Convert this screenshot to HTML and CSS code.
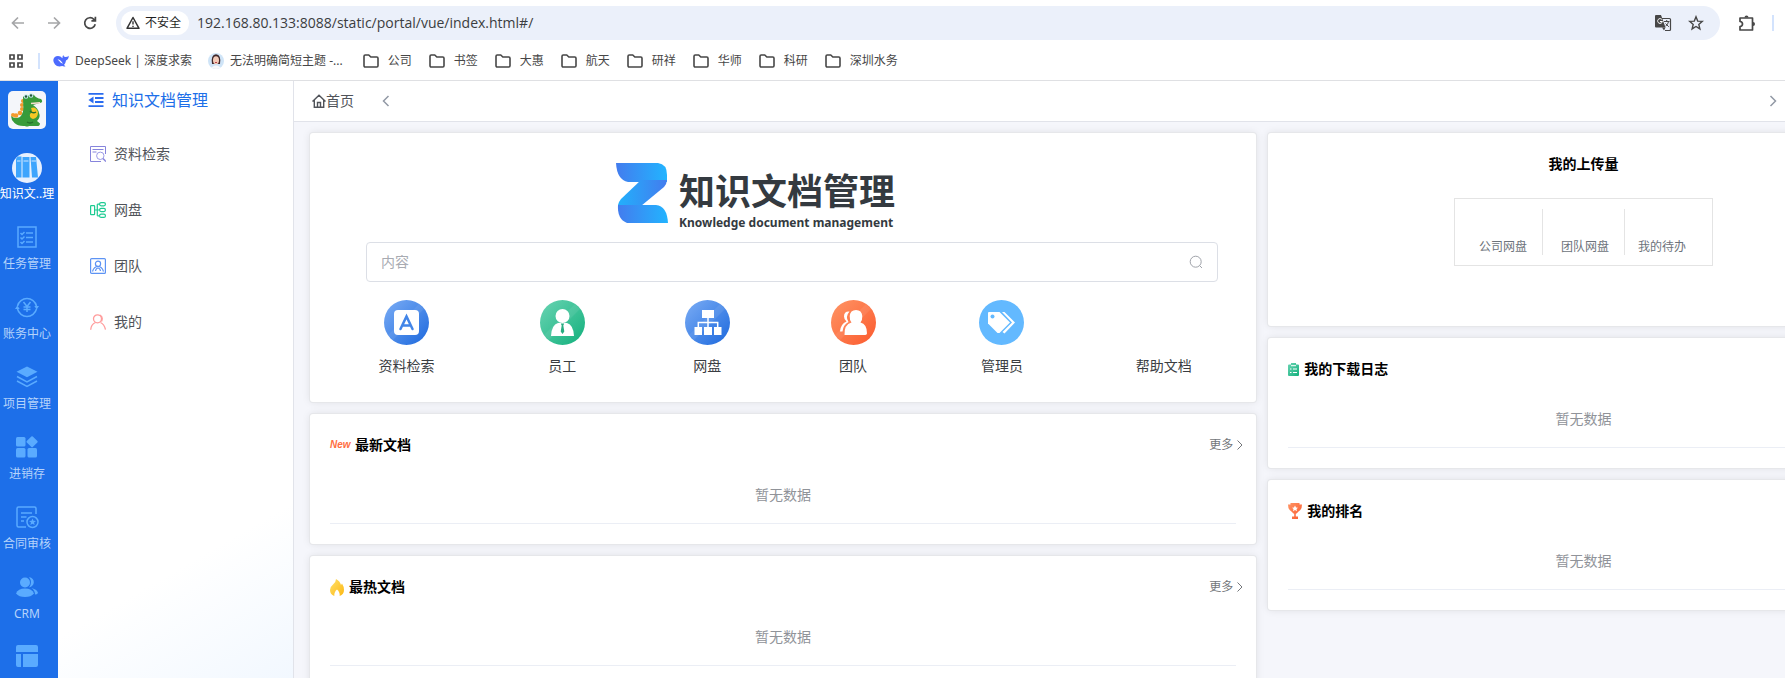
FILE: index.html
```html
<!DOCTYPE html>
<html lang="zh-CN">
<head>
  <meta charset="UTF-8" />
  <meta name="viewport" content="width=device-width, initial-scale=1" />
  <title>知识文档管理</title>
  <link rel="stylesheet" href="styles.css">
</head>
<body>
  <!-- shared symbols and gradients -->
  <svg class="defs" aria-hidden="true">
    <defs>
      <symbol id="folder" viewBox="0 0 16 16">
        <path d="M1 3.200q0-1.200 1.200-1.200h3.600l2 2h6q1.200 0 1.200 1.200v7.600q0 1.200-1.200 1.200H2.200Q1 14 1 12.800z" fill="none" stroke="#474747" stroke-width="1.600" stroke-linejoin="round"/>
      </symbol>
      <linearGradient id="blue" x1="0" y1="0" x2="1" y2="1"><stop offset="0" stop-color="#7badf5"/><stop offset="1" stop-color="#1c68dd"/></linearGradient>
      <linearGradient id="green" x1="0" y1="0" x2="1" y2="1"><stop offset="0" stop-color="#6ad4b3"/><stop offset="1" stop-color="#12b07c"/></linearGradient>
      <linearGradient id="orange" x1="0" y1="0" x2="1" y2="1"><stop offset="0" stop-color="#ff9565"/><stop offset="1" stop-color="#fb5a2e"/></linearGradient>
      <linearGradient id="brand"><stop offset="0" stop-color="#437cee"/><stop offset="1" stop-color="#22b4ff"/></linearGradient>
      <linearGradient id="brand-mid"><stop offset="0" stop-color="#22b0fc"/><stop offset="1" stop-color="#437cee"/></linearGradient>
      <linearGradient id="fire" x1="0" y1="0" x2="1" y2="1"><stop offset="0" stop-color="#ffe16b"/><stop offset="1" stop-color="#fdb813"/></linearGradient>
    </defs>
  </svg>

  <header class="browser">
    <div class="toolbar">
      <button class="nav-btn muted" aria-label="后退"><svg width="16" height="16" viewBox="0 0 16 16"><path d="M14 8H3M8 2.500 2.500 8 8 13.500"/></svg></button>
      <button class="nav-btn muted" aria-label="前进"><svg width="16" height="16" viewBox="0 0 16 16"><path d="M2 8h11M8 2.500 13.500 8 8 13.500"/></svg></button>
      <button class="nav-btn" aria-label="刷新"><svg width="16" height="16" viewBox="0 0 16 16"><path d="M13.200 9.200A5.300 5.300 0 1 1 11.800 4.300L13 5.500M13.400 1.800v4h-4"/></svg></button>
      <div class="address">
        <button class="chip">
          <svg width="14" height="14" viewBox="0 0 14 14"><path d="M7 1.500 13 12.300H1z" fill="none" stroke="#333" stroke-width="1.500" stroke-linejoin="round"/><path d="M7 5.200v3.400M7 9.700v1.400" stroke="#333" stroke-width="1.400"/></svg>
          不安全
        </button>
        <input class="url" type="text" aria-label="地址" value="192.168.80.133:8088/static/portal/vue/index.html#/" />
        <button class="nav-btn" aria-label="翻译">
          <svg width="18" height="18" viewBox="0 0 18 18"><path d="M8 4.500h7.500q1 0 1 1v10q0 1-1 1H11" fill="none" stroke="#474747" stroke-width="1.200"/><path class="solid" d="M2 1h5l4.500 12.500H2q-1 0-1-1V2q0-1 1-1z"/><path class="thin-w" d="M8 5.600A2.400 2.400 0 1 0 8.400 7.500H6"/><path class="thin-d" d="M10 7.500h5.500M12.700 6v1.500M14.500 7.800q-.5 2.500-3 4.500M11.500 9.500l3.300 3.300"/><path class="solid" d="M8 13.500h3.500L10 16.500z"/></svg>
        </button>
        <button class="nav-btn" aria-label="收藏">
          <svg width="16" height="16" viewBox="0 0 16 16"><path d="m8 1.800 1.700 4.300 4.600.3-3.500 3 1.100 4.500L8 11.500l-3.900 2.400 1.100-4.500-3.500-3 4.600-.3z" stroke-width="1.400"/></svg>
        </button>
      </div>
      <button class="nav-btn" aria-label="扩展程序">
        <svg width="18" height="18" viewBox="0 0 18 18"><path d="M2 4h12.500v12H2v-3.500q2.500-.3 2.500-2.500T2 7.500z" stroke-linejoin="round"/><path class="solid" d="M6.500 3.500a2 2 0 0 1 4 0zM15 8a2 2 0 0 1 0 4z"/></svg>
      </button>
      <span class="sep"></span>
    </div>
    <nav class="bookmarks">
      <button class="nav-btn apps" aria-label="应用"><svg width="14" height="14" viewBox="0 0 14 14"><path d="M1 1h4v4H1zM9 1h4v4H9zM1 9h4v4H1zM9 9h4v4H9z"/></svg></button>
      <span class="sep"></span>
      <a class="deepseek" href="#"><svg width="16" height="16" viewBox="0 0 16 16"><path d="M.3 7Q1 3.200 5 3q2.500 0 4.500 2.200Q9.300 3.400 10.200 2q.5 1.800 2 2.100Q14.700 4 15.700 2.800 15.800 6.500 13 7.600q-.4 3-2 4.300l1.500 1.300q-1.800.6-3.300-.2Q4.500 14.300 2 11.500.2 9.500.3 7z" fill="#4d6bfe"/><path d="M4.500 6.200q3.700.8 5.500 4.600-2.500-.5-3.800-2.800z" fill="#fff"/></svg>DeepSeek | 深度求索</a>
      <a class="topic" href="#"><svg width="16" height="16" viewBox="0 0 16 16"><circle cx="8" cy="8" r="8" fill="#cfe4f7"/><path d="M4 11Q2.500 2 8 1.300 13.500 2 12 11z" fill="#40282a"/><ellipse cx="8" cy="7.300" rx="3" ry="4" fill="#f3cbb9"/><path d="M3.500 14.500Q8 10.500 12.500 14.500 8 17.300 3.500 14.500z" fill="#f8f8fa"/><path d="M7 9.500h2" stroke="#b9424b"/></svg>无法明确简短主题 -...</a>
      <a class="dir" href="#"><svg width="18" height="16"><use href="#folder"/></svg>公司</a>
      <a class="dir" href="#"><svg width="18" height="16"><use href="#folder"/></svg>书签</a>
      <a class="dir" href="#"><svg width="18" height="16"><use href="#folder"/></svg>大惠</a>
      <a class="dir" href="#"><svg width="18" height="16"><use href="#folder"/></svg>航天</a>
      <a class="dir" href="#"><svg width="18" height="16"><use href="#folder"/></svg>研祥</a>
      <a class="dir" href="#"><svg width="18" height="16"><use href="#folder"/></svg>华师</a>
      <a class="dir" href="#"><svg width="18" height="16"><use href="#folder"/></svg>科研</a>
      <a class="dir" href="#"><svg width="18" height="16"><use href="#folder"/></svg>深圳水务</a>
    </nav>
  </header>

  <div class="app">
    <nav class="rail">
      <svg class="avatar" width="38" height="38" viewBox="0 0 38 38">
        <rect width="38" height="38" rx="5" fill="#f4f6fa"/>
        <g fill="#f39a2c"><circle cx="15" cy="10" r="2"/><circle cx="14" cy="14" r="2"/><circle cx="14" cy="18" r="2"/><circle cx="12" cy="22" r="2.300"/><circle cx="8" cy="24.500" r="2.300"/><circle cx="5" cy="24" r="2"/></g>
        <path d="M15 6Q17 3 20 5q3-3 6-1 2 3 7 4 2 2 .5 3.500L25 14q5 3 6 8 2 4-2 8l3 2.500q0 3-4 2.500h-7q-2 1-4 0-7 .5-10.500-3T3 25q4 3.500 9 1 4-4 3.300-11z" fill="#389b3a"/>
        <path d="M23 17q5-2 7 4 0 6-5 7-4-1-3-5 3-2 1-6z" fill="#f5c725"/>
        <path d="M23 12.500l9-.8" stroke="#f7dcd0" stroke-width="1.500"/>
        <path d="M22 20q3 3 6 1M19 31q3 2 6 0" fill="none" stroke="#23702a" stroke-width="1.400"/>
        <circle cx="18" cy="5.500" r="2.300" fill="#c6e9ec"/><circle cx="23" cy="4.500" r="2.300" fill="#c6e9ec"/><circle cx="18" cy="5.500" r="1.200" fill="#24543b"/><circle cx="23" cy="4.500" r="1.200" fill="#24543b"/>
      </svg>
      <a class="rail-item active" href="#">
        <svg width="30" height="30" viewBox="0 0 30 30"><circle cx="15" cy="15" r="15" fill="#e6f0fe"/><path d="M4 6.500q0-2 2-3h3.500v21H4zM10.500 4h7v20.500h-7zM18.500 4H24l2 20.500h-6z" fill="#3ea5fd"/><path d="M5 8h3.500M11.500 8h5M19.500 8H24" stroke="#cfe6ff"/></svg>
        <span>知识文..理</span>
      </a>
      <a class="rail-item" href="#">
        <svg width="24" height="24" viewBox="0 0 24 24"><path class="ln" d="M3 2h18v20H3zM11 8h7M11 12.500h7M11 17h7M5.500 8l1.500 1.500L9.500 7M5.500 12.500 7 14l2.500-2.500M5.500 17 7 18.500 9.500 16"/></svg>
        <span>任务管理</span>
      </a>
      <a class="rail-item" href="#">
        <svg width="24" height="24" viewBox="0 0 24 24"><path class="ln" d="M2.500 11A9.800 9.800 0 0 1 21.500 11M21.500 14A9.800 9.800 0 0 1 2.500 14M8.500 7l3.500 4.500L15.500 7M8.500 12h7M8.500 14.500h7M12 11.500V17"/><path class="fl" d="M19.300 11 21.700 14.500 24 11zM0 14 2.300 10.500 4.700 14z"/></svg>
        <span>账务中心</span>
      </a>
      <a class="rail-item" href="#">
        <svg width="24" height="24" viewBox="0 0 24 24"><path class="fl" d="m12 1.500 10.500 5.300L12 12.300 1.500 6.800z"/><path class="ln" stroke-width="2" d="M2 11.500l10 5.300 10-5.300M2 16l10 5.300L22 16"/></svg>
        <span>项目管理</span>
      </a>
      <a class="rail-item" href="#">
        <svg width="24" height="24" viewBox="0 0 24 24"><g class="fl"><rect x="1" y="2" width="9.500" height="9.500" rx="1.500"/><rect x="1" y="13" width="9.500" height="9.500" rx="1.500"/><rect x="12.500" y="13" width="9.500" height="9.500" rx="1.500"/><rect x="12.800" y="2.500" width="8.500" height="8.500" rx="1" transform="rotate(45 17 6.800)"/></g></svg>
        <span>进销存</span>
      </a>
      <a class="rail-item" href="#">
        <svg width="24" height="24" viewBox="0 0 24 24"><path class="ln" d="M21 9V3.500Q21 2 19.500 2h-16Q2 2 2 3.500v17Q2 22 3.500 22H11M6 8h11M6 12h5.500M6 16h3"/><circle class="ln" cx="17.500" cy="17" r="5.500"/><path class="fl" d="m17.500 13.500 1 2.300 2.500.2-2 1.600.7 2.500-2.200-1.400-2.200 1.400.7-2.500-2-1.600 2.500-.2z"/></svg>
        <span>合同审核</span>
      </a>
      <a class="rail-item" href="#">
        <svg width="24" height="24" viewBox="0 0 24 24"><g class="fl"><circle cx="10" cy="7.500" r="5"/><path d="M1 18.500Q3 13.500 10 13.500T19 18.500Q16 22 10 22T1 18.500z"/><path d="M14 2q5 1 4.800 5.500Q18.500 11 14 12.500 18 7.500 14 2zM16.500 13q6 1.500 6.500 5-1 1.500-3 1.500Q20 15.500 16.500 13z"/></g></svg>
        <span>CRM</span>
      </a>
      <a class="rail-item" href="#" aria-label="工作台">
        <svg width="24" height="24" viewBox="0 0 24 24"><path class="fl" d="M3 1h18q2 0 2 2v5H1V3q0-2 2-2zM1 10h5v13H3q-2 0-2-2zM8 10h15v11q0 2-2 2H8z"/></svg>
      </a>
    </nav>

    <aside class="menu">
      <h2 class="menu-title">
        <svg width="16" height="16" viewBox="0 0 16 16"><path d="M.5 1.800h15M7 6h8.500M7 10h8.500M.5 14.200h15" stroke="#2a6cf0" stroke-width="1.800"/><path d="M5.500 4.500v7L.5 8z" fill="#2a6cf0"/></svg>
        知识文档管理
      </h2>
      <a class="menu-item" href="#"><svg width="16" height="16" viewBox="0 0 16 16" fill="none" stroke="#8684dc"><path d="M15.500 8V.5H.5v15H11M2.500 3.500h11M2.500 6h4"/><circle cx="10.300" cy="9.800" r="3.700" stroke="#9b9ae6"/><path d="m13 12.500 3 3" stroke-width="1.500"/></svg>资料检索</a>
      <a class="menu-item" href="#"><svg width="16" height="16" viewBox="0 0 16 16" fill="none" stroke="#1dcb92" stroke-width="1.200"><rect x=".6" y="3.600" width="4" height="9" rx=".6"/><rect x="9.600" y=".6" width="5.800" height="3.200" rx="1.500"/><rect x="9.600" y="6.400" width="5.800" height="3.200" rx="1.500"/><rect x="9.600" y="12.200" width="5.800" height="3.200" rx="1.500"/><path d="M4.600 8h5M7.300 13.800V2.200M7.300 2.200h2.300M7.300 13.800h2.300"/></svg>网盘</a>
      <a class="menu-item" href="#"><svg width="16" height="16" viewBox="0 0 16 16" fill="none" stroke="#5d93f4" stroke-width="1.200"><rect x=".6" y=".6" width="14.800" height="14.800" rx="1"/><circle cx="8" cy="5.800" r="2.600"/><path d="M2.500 13.500Q4 8.500 8 8.500t5.500 5M5.500 13q.5-3 2.500-3t2.500 3"/></svg>团队</a>
      <a class="menu-item" href="#"><svg width="16" height="16" viewBox="0 0 16 16" fill="none" stroke="#ff9c9c" stroke-width="1.300"><circle cx="7.500" cy="4.800" r="4"/><path d="M.7 15.700Q1 10.500 5.500 8.500M10.500 8.500q4 2 5 7.200M10 1q3.500 2 1.500 6.500"/></svg>我的</a>
    </aside>

    <main class="page">
      <div class="tabs">
        <a class="tab" href="#"><svg width="14" height="14" viewBox="0 0 14 14"><path d="M.5 7.500 7 1.200l6.500 6.300M2.300 6v7.300h9.400V6M5.500 13V8.500h3V13" fill="none" stroke="#505359" stroke-width="1.400"/></svg>首页</a>
        <button class="tab-nav" aria-label="向左"><svg width="8" height="12" viewBox="0 0 8 12"><path d="M6.500 1 1.500 6l5 5"/></svg></button>
        <button class="tab-nav next" aria-label="向右"><svg width="8" height="12" viewBox="0 0 8 12"><path d="m1.500 1 5 5-5 5"/></svg></button>
      </div>

      <div class="content">
        <div class="col">
          <section class="card hero">
            <div class="brand">
              <svg width="52" height="60" viewBox="0 0 52 60">
                <path d="M0 0h42q9 1 9 12v7h-4H12Q1 17 0 0z" fill="url(#brand)"/>
                <path d="M25 17h26q-.3 4-3 7L25 43l-23-1q.5-3 3-6z" fill="url(#brand-mid)"/>
                <path d="M2 42h38q11 1 12 18H11Q1 56 2 42z" fill="url(#brand)"/>
              </svg>
              <div>
                <h1>知识文档管理</h1>
                <p>Knowledge document management</p>
              </div>
            </div>
            <div class="search">
              <input type="text" placeholder="内容" aria-label="内容" />
              <button aria-label="搜索"><svg width="14" height="14" viewBox="0 0 14 14"><path d="M10.600 10.600 13 13" stroke="#a0a3aa"/><circle cx="6.700" cy="6.700" r="5.500" fill="none" stroke="#a0a3aa"/></svg></button>
            </div>
            <nav class="links">
              <a href="#"><svg width="45" height="45" viewBox="0 0 45 45"><circle cx="22.500" cy="22.500" r="22.500" fill="url(#blue)"/><path d="M4 35 35 4l5 5L9 40z" fill="#fff" opacity=".08"/><rect x="10" y="10" width="25" height="25" rx="4" fill="#fff"/><path d="m16.500 29 6-12.500 6 12.500M19 25.500h7" fill="none" stroke="#4285e8" stroke-width="2.500" stroke-linecap="round"/></svg>资料检索</a>
              <a href="#"><svg width="45" height="45" viewBox="0 0 45 45"><circle cx="22.500" cy="22.500" r="22.500" fill="url(#green)"/><path d="M4 35 35 4l5 5L9 40z" fill="#fff" opacity=".08"/><circle cx="22.500" cy="16" r="7" fill="#fff"/><path d="M11 36q.5-11 7-13h9q6.500 2 7 13z" fill="#fff"/><path d="m20.800 23.500h3.400l-.9 2 1 6-1.800 2.500-1.800-2.500 1-6z" fill="#27ad81"/></svg>员工</a>
              <a href="#"><svg width="45" height="45" viewBox="0 0 45 45"><circle cx="22.500" cy="22.500" r="22.500" fill="url(#blue)"/><path d="M4 35 35 4l5 5L9 40z" fill="#fff" opacity=".08"/><path d="M17 10h12v8H17zM9.500 27H17v8H9.500zM19 27h8v8h-8zM29 27h7.500v8H29z" fill="#fff"/><path d="M23 17v10M13.300 27.500v-5h19.400v5" fill="none" stroke="#fff" stroke-width="1.500"/></svg>网盘</a>
              <a href="#"><svg width="45" height="45" viewBox="0 0 45 45"><circle cx="22.500" cy="22.500" r="22.500" fill="url(#orange)"/><path d="M4 35 35 4l5 5L9 40z" fill="#fff" opacity=".08"/><path d="M13.500 35Q13 24.500 20.500 22.500 18.500 20 18.700 16q.5-6 6.300-6t6.300 6q.2 4-1.800 6.500Q36 24 36 33.500q-.5 1.500-2 1.500z" fill="#fff"/><path d="M18.500 11.500q-5.500-.5-5.500 5 0 3 2.500 5-6 2.500-6.500 10h2.500q.5-6.500 6-9.500-3.500-5.500 1-10.500z" fill="#fff"/></svg>团队</a>
              <a href="#"><svg width="45" height="45" viewBox="0 0 45 45"><circle cx="22.500" cy="22.500" r="22.500" fill="#63b9ff"/><path d="M9 13q0-1 1-1h10.500L31 22.500 20.500 33h-2L9 23.500z" fill="#fff"/><circle cx="13.500" cy="16.500" r="2" fill="#63b9ff"/><path d="M23 12h2.500L36 22.500 25.500 33.500 23.500 32 33 22.500z" fill="#fff"/></svg>管理员</a>
              <a class="no-icon" href="#">帮助文档</a>
            </nav>
          </section>

          <section class="card list">
            <div class="list-head">
              <h3><span class="new" aria-hidden="true">New</span>最新文档</h3>
              <a class="more" href="#">更多<svg width="8" height="12" viewBox="0 0 8 12"><path d="m1.500 1.500 4.500 4.500-4.500 4.500"/></svg></a>
            </div>
            <p class="empty">暂无数据</p>
          </section>

          <section class="card list">
            <div class="list-head">
              <h3><svg width="14" height="17" viewBox="0 0 14 17"><path d="M6 0q4 2 5 6l1-1.500q2 3 2 6.500 0 4.500-4.300 6 .3-4-2.700-6.500-3 2.500-2.700 6.500Q0 15.500 0 11q.3-3.500 3-5.500Q6 3 6 0z" fill="url(#fire)"/></svg>最热文档</h3>
              <a class="more" href="#">更多<svg width="8" height="12" viewBox="0 0 8 12"><path d="m1.500 1.500 4.500 4.500-4.500 4.500"/></svg></a>
            </div>
            <p class="empty">暂无数据</p>
          </section>
        </div>

        <div class="col">
          <section class="card upload">
            <h3>我的上传量</h3>
            <div class="stats">
              <a href="#">公司网盘</a>
              <a href="#">团队网盘</a>
              <a href="#">我的待办</a>
            </div>
          </section>

          <section class="card list">
            <div class="list-head">
              <h3><svg width="11" height="13" viewBox="0 0 11 13"><path d="M1 1.500h2V0h5v1.500h2q1 0 1 1V12q0 1-1 1H1q-1 0-1-1V2.500q0-1 1-1z" fill="url(#green)"/><path d="M3 2.700h5M2 6h1.500M5 6h4M2 9.500h1.500M5 9.500h4" stroke="#fff"/></svg>我的下载日志</h3>
            </div>
            <p class="empty">暂无数据</p>
          </section>

          <section class="card list">
            <div class="list-head">
              <h3><svg width="14" height="16" viewBox="0 0 14 16"><path d="M2.500 0h9v1.500H14Q14 7 10 9q-1 1.500-2.200 1.800v2.700H10V16H4v-2.500h2.200v-2.700Q5 10.500 4 9 0 7 0 1.500h2.500z" fill="url(#orange)"/><path d="m7 2.500 1 2 2 .2L8.500 6l.5 2.200-2-1.200-2 1.200L5.500 6 4 4.700l2-.2z" fill="#fff"/></svg>我的排名</h3>
            </div>
            <p class="empty">暂无数据</p>
          </section>
        </div>
      </div>
    </main>
  </div>
</body>
</html>
```
FILE: styles.css
```css
* {
  box-sizing: border-box;
}
body {
  margin: 0;
  height: 100vh;
  display: flex;
  flex-direction: column;
  overflow: hidden;
  font-family: "Noto Sans", "Noto Sans CJK SC", sans-serif;
  font-size: 14px;
  line-height: 20px;
  color: #505359;
  background: #fff;
}
h1, h2, h3, p {
  margin: 0;
}
a {
  color: inherit;
  text-decoration: none;
}
button {
  padding: 0;
  border: none;
  background: none;
  font: inherit;
  cursor: pointer;
}
input {
  font: inherit;
  outline: none;
}
svg {
  display: block;
  flex: none;
}
.defs {
  width: 0;
  height: 0;
  position: absolute;
}

/* browser bars */
.browser {
  flex: none;
  border-bottom: 1px solid #dfe0e3;
}
.toolbar {
  display: flex;
  align-items: center;
  gap: 20px;
  padding: 6px 11px 0 10px;
}
.nav-btn svg {
  fill: none;
  stroke: #474747;
  stroke-width: 1.7;
}
.nav-btn .solid {
  fill: #474747;
  stroke: none;
}
.nav-btn .thin-w {
  stroke: #fff;
  stroke-width: 1;
}
.nav-btn .thin-d {
  stroke-width: 1;
}
.muted svg {
  stroke: #a5a6a8;
}
.address {
  flex: 1;
  display: flex;
  align-items: center;
  gap: 16px;
  height: 34px;
  margin: 0 -2px;
  padding: 0 16px 0 5px;
  border-radius: 17px;
  background: #ebf0fa;
}
.chip {
  display: flex;
  align-items: center;
  gap: 5px;
  height: 24px;
  margin-right: -8px;
  padding: 0 8px 0 5px;
  border-radius: 12px;
  background: #fff;
  color: #1f1f1f;
  font-size: 12px;
}
.url {
  flex: 1;
  padding: 0;
  border: none;
  background: none;
  color: #3b3d40;
  font-family: "Open Sans", "Noto Sans", sans-serif;
  font-size: 14px;
}
.sep {
  width: 2px;
  height: 16px;
  background: #d3e3fd;
}
.toolbar .sep {
  margin-left: -4px;
}
.bookmarks {
  display: flex;
  align-items: center;
  gap: 16px;
  height: 40px;
  padding: 1px 9px 0;
  font-size: 12px;
  color: #474747;
}
.bookmarks a {
  display: flex;
  align-items: center;
  gap: 6px;
  white-space: nowrap;
}
.bookmarks .sep {
  margin-left: -1px;
}
.bookmarks .deepseek {
  margin-left: -3px;
}
.bookmarks .topic {
  margin-right: 3px;
}
.bookmarks .dir {
  gap: 8px;
}

.app {
  flex: 1;
  display: flex;
  min-height: 0;
}

/* blue rail */
.rail {
  flex: none;
  width: 58px;
  padding: 10px 4px 0 0;
  display: flex;
  flex-direction: column;
  align-items: center;
  overflow: hidden;
  background: #1d6fe9;
  color: #b5d3fb;
  font-size: 12px;
}
.avatar {
  margin-bottom: 20px;
}
.rail-item {
  flex: none;
  display: flex;
  flex-direction: column;
  align-items: center;
  justify-content: flex-end;
  gap: 5px;
  height: 70px;
  white-space: nowrap;
}
.rail-item.active {
  gap: 1px;
  height: 55px;
  color: #fff;
}
.rail-item:last-child {
  justify-content: flex-start;
  padding-top: 20px;
}
.rail .ln {
  fill: none;
  stroke: #5aabff;
  stroke-width: 1.5;
}
.rail .fl {
  fill: #5aabff;
}

/* module menu */
.menu {
  flex: none;
  width: 236px;
  padding: 7px 30px;
  border-right: 1px solid #e1e3ea;
  background: linear-gradient(150deg, #fff 76%, #f2f8ff);
}
.menu-title {
  display: flex;
  align-items: center;
  gap: 8px;
  height: 24px;
  margin-bottom: 14px;
  color: #1d6fe9;
  font-size: 16px;
  font-weight: 400;
}
.menu-item {
  display: flex;
  align-items: center;
  gap: 8px;
  height: 56px;
  padding-left: 2px;
}

/* page */
.page {
  flex: 1;
  min-width: 0;
  overflow: hidden;
  background: #f5f6fb;
}
.tabs {
  display: flex;
  align-items: center;
  gap: 28px;
  height: 41px;
  padding: 0 8px 0 18px;
  border-bottom: 1px solid #e1e3ea;
  background: #fff;
}
.tab {
  display: flex;
  align-items: center;
}
.tab-nav svg {
  fill: none;
  stroke: #9299a5;
  stroke-width: 1.5;
}
.tab-nav.next {
  margin-left: auto;
}
/* the dashboard is wider than the window and runs off its right edge */
.content {
  display: grid;
  grid-template-columns: 3fr 2fr;
  gap: 12px;
  width: calc(100% + 114px);
  padding: 11px 0 12px 16px;
}
.col {
  display: flex;
  flex-direction: column;
  gap: 12px;
  min-width: 0;
}
.card {
  flex: none;
  border-radius: 3px;
  background: #fff;
  box-shadow: 0 0 0 1px #e6e7ea, 0 0 8px rgba(0, 0, 0, 0.1);
}

.hero {
  padding: 30px 0 26px;
}
.brand {
  display: flex;
  justify-content: center;
  gap: 11px;
  height: 79px;
  margin-right: 55px;
  color: #343a40;
}
.brand h1 {
  font-family: "Noto Sans CJK SC", sans-serif;
  font-size: 36px;
  line-height: 52px;
}
.brand p {
  font-size: 12px;
  font-weight: 700;
  line-height: 16px;
}
.search {
  display: flex;
  align-items: center;
  height: 40px;
  margin: 0 38px 0 56px;
  padding: 0 14px;
  border: 1px solid #dcdfe6;
  border-radius: 4px;
}
.search input {
  flex: 1;
  padding: 0;
  border: none;
}
.search input::placeholder {
  color: #a8abb2;
}
.links {
  display: grid;
  grid-template-columns: 167fr 145fr 145fr 147fr 151fr 173fr;
  margin: 18px 6px 0 13px;
  color: #3a3d42;
}
.links a {
  display: flex;
  flex-direction: column;
  align-items: center;
  justify-content: flex-end;
  gap: 11px;
}

.list {
  height: 130px;
  padding: 20px;
}
.list-head {
  display: flex;
  align-items: center;
  justify-content: space-between;
  height: 22px;
  margin-right: -8px;
}
.card h3 {
  display: flex;
  align-items: center;
  gap: 5px;
  color: #000;
  font-size: 14px;
  font-weight: 700;
}
.new {
  width: 20px;
  color: #ff6f43;
  font-family: "Liberation Sans", sans-serif;
  font-size: 10px;
  font-style: italic;
}
.more {
  display: flex;
  align-items: center;
  gap: 3px;
  color: #73767a;
  font-size: 12px;
}
.more svg {
  fill: none;
  stroke: #73767a;
}
.empty {
  height: 68px;
  padding-top: 29px;
  border-bottom: 1px solid #ebeef5;
  color: #909399;
  text-align: center;
}

.upload {
  display: flex;
  flex-direction: column;
  align-items: center;
  gap: 24px;
  height: 193px;
  padding-top: 21px;
}
.stats {
  display: flex;
  padding: 10px 26px 10px 6px;
  border: 1px solid #e4e4e4;
  color: #6d737b;
  font-size: 12px;
  line-height: 16px;
}
.stats a {
  display: flex;
  align-items: flex-end;
  height: 46px;
  padding: 0 15px 0 18px;
  border-right: 1px solid #e4e4e4;
}
.stats a:last-child {
  padding: 0 0 0 13px;
  border: none;
}
```
